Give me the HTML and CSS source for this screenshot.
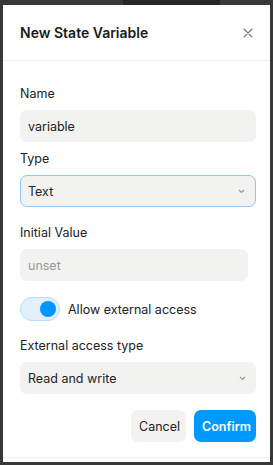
FILE: index.html
```html
<!DOCTYPE html>
<html lang="en">
<head>
    <meta charset="UTF-8">
    <meta name="viewport" content="width=device-width, initial-scale=1.0">
    <title>New State Variable</title>
    <link rel="stylesheet" href="styles.css">
</head>
<body>

<div class="topbar"></div>

<div class="dialog">
    <div class="dialog-header">
        <h1>New State Variable</h1>
        <button class="close" aria-label="Close">
            <svg width="10" height="10" viewBox="0 0 10 10">
                <path d="M1 1 L9 9 M9 1 L1 9" stroke="#777" stroke-width="1.1" stroke-linecap="round"/>
            </svg>
        </button>
    </div>

    <div class="dialog-body">
        <label class="label">Name</label>
        <div class="field">variable</div>

        <label class="label tight">Type</label>
        <div class="field select focused">
            <span>Text</span>
            <svg class="chevron" width="7" height="5" viewBox="0 0 7 5">
                <path d="M1 1 L3.5 3.5 L6 1" fill="none" stroke="#999" stroke-width="1.2"/>
            </svg>
        </div>

        <label class="label">Initial Value</label>
        <div class="field short placeholder">unset</div>

        <div class="toggle-row">
            <span class="toggle"><span class="knob"></span></span>
            <span class="toggle-text">Allow external access</span>
        </div>

        <label class="label">External access type</label>
        <div class="field select">
            <span>Read and write</span>
            <svg class="chevron" width="7" height="5" viewBox="0 0 7 5">
                <path d="M1 1 L3.5 3.5 L6 1" fill="none" stroke="#999" stroke-width="1.2"/>
            </svg>
        </div>

        <div class="actions">
            <button class="button gray">Cancel</button>
            <button class="button blue">Confirm</button>
        </div>
    </div>
</div>

</body>
</html>
```

FILE: styles.css
```css
body {
    font-family: Inter, "Noto Sans", sans-serif;
    background-color: #383838;
    margin: 0;
    padding: 0;
    color: #222;
}
.topbar {
    position: absolute;
    top: 0;
    left: 123px;
    width: 97px;
    height: 5px;
    background-color: #262626;
}
.dialog {
    margin: 5px 0 0 3px;
    width: 267px;
    height: 457px;
    background-color: #fff;
    box-sizing: border-box;
}
.dialog-header {
    height: 56px;
    display: flex;
    align-items: center;
    justify-content: space-between;
    padding: 0 17px;
    border-bottom: 1px solid #eee;
    box-sizing: border-box;
}
h1 {
    font-size: 14px;
    font-weight: 600;
    margin: 0;
    color: #1a1a1a;
}
.close {
    border: none;
    background: none;
    padding: 0;
    display: flex;
    cursor: pointer;
}
.dialog-body {
    display: flex;
    flex-direction: column;
    padding: 25px 14px 15px 17px;
    border-bottom: 1px solid #eee;
}
.label {
    font-size: 12.5px;
    line-height: 16px;
    color: #222;
    margin-bottom: 8px;
}
.field {
    height: 32px;
    box-sizing: border-box;
    background-color: #f2f2f1;
    border-radius: 7px;
    display: flex;
    align-items: center;
    padding: 0 8px;
    font-size: 12.5px;
    color: #222;
}
.field + .label {
    margin-top: 16px;
}
.field + .label.tight {
    margin-top: 9px;
}
.select.focused + .label {
    margin-top: 18px;
}
.field.short {
    width: 228px;
}
.placeholder {
    color: #999;
}
.select {
    justify-content: space-between;
    padding-right: 10px;
}
.select.focused {
    border: 1px solid #8cc8fb;
    padding-left: 7px;
}
.toggle-row {
    display: flex;
    align-items: center;
    gap: 8px;
    margin-top: 16px;
}
.toggle {
    width: 40px;
    height: 24px;
    box-sizing: border-box;
    border-radius: 12px;
    background-color: #e2f0fe;
    border: 1px solid #b8dbfc;
    display: flex;
    align-items: center;
    justify-content: flex-end;
    padding: 0 3px;
}
.knob {
    width: 16px;
    height: 16px;
    border-radius: 50%;
    background-color: #0095ff;
}
.toggle-text {
    font-size: 12.5px;
    color: #222;
}
.toggle-row + .label {
    margin-top: 17px;
}
.actions {
    display: flex;
    justify-content: flex-end;
    gap: 8px;
    margin-top: 16px;
}
.button {
    height: 32px;
    padding: 0 8px;
    font-family: inherit;
    font-size: 12.5px;
    border: none;
    border-radius: 7px;
    cursor: pointer;
}
.button.gray {
    background-color: #f2f2f1;
    color: #222;
    width: 55px;
}
.button.blue {
    background-color: #0099ff;
    color: #fff;
    font-weight: 600;
    width: 62px;
}
```
